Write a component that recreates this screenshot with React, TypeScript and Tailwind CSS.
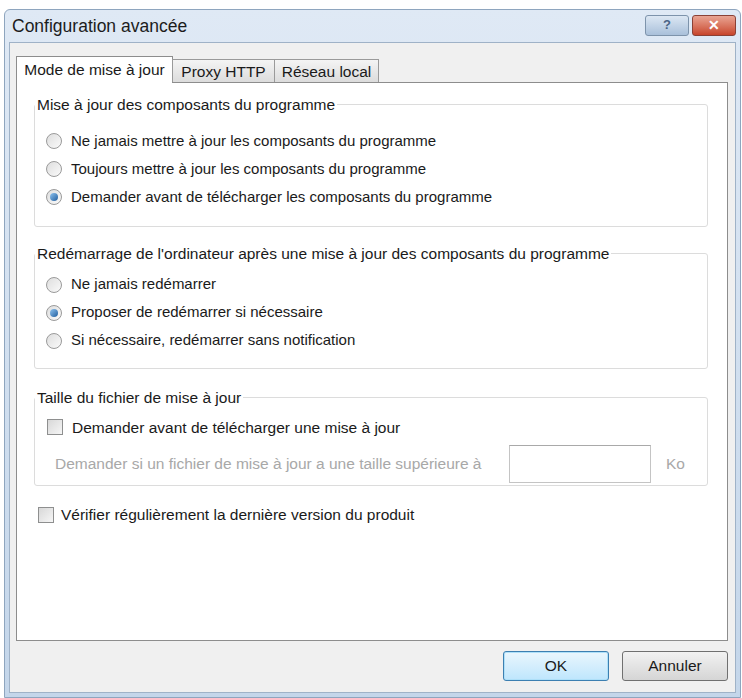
import React, { useState } from 'react';

const FONT = "font-['Liberation_Sans',Arial,sans-serif]";

function Radio({ checked, label, onSelect }: { checked: boolean; label: string; onSelect: () => void }) {
  return (
    <label onClick={onSelect} className="flex items-center h-[28px] cursor-pointer">
      <span className="w-[16px] h-[16px] rounded-full border border-[#9a9a9a] bg-gradient-to-br from-[#dedede] to-[#fafafa] flex items-center justify-center mr-[9px]">
        {checked && <span className="w-[8px] h-[8px] rounded-full bg-gradient-to-br from-[#8fc4f0] to-[#1f5e9e]" />}
      </span>
      <span className="text-[15px] text-[#1a1a1a]">{label}</span>
    </label>
  );
}

function Check({ checked, label, onToggle, gap = 'mr-[9px]' }: { checked: boolean; label: string; onToggle: () => void; gap?: string }) {
  return (
    <label onClick={onToggle} className="flex items-center cursor-pointer">
      <span className={`w-[16px] h-[16px] border border-[#8e8f8f] bg-gradient-to-br from-[#d8d8d8] to-[#f6f6f6] ${gap} flex items-center justify-center text-[12px] leading-none text-[#2a5a8a]`}>
        {checked ? '✓' : ''}
      </span>
      <span className="text-[15.5px] text-[#1a1a1a]">{label}</span>
    </label>
  );
}

function Group({ title, className, children }: { title: string; className?: string; children: React.ReactNode }) {
  return (
    <fieldset className={`border border-[#dcdcdc] rounded-[3px] px-[11px] ${className ?? ''}`}>
      <legend className="px-[2px] -ml-[11px] text-[15.5px] text-[#1a1a1a]">{title}</legend>
      {children}
    </fieldset>
  );
}

export default function App() {
  const [tab, setTab] = useState(0);
  const [update, setUpdate] = useState(2);
  const [reboot, setReboot] = useState(1);
  const [askSize, setAskSize] = useState(false);
  const [checkVersion, setCheckVersion] = useState(false);

  const tabs = [
    { label: 'Mode de mise à jour', w: 'w-[157px]' },
    { label: 'Proxy HTTP', w: 'w-[103px]' },
    { label: 'Réseau local', w: 'w-[105px]' },
  ];

  return (
    <div className={`w-[742px] h-[698px] bg-white pt-[9px] pl-[4px] ${FONT}`}>
      <div className="w-[737px] h-[689px] rounded-t-[6px] border border-[#8ea5be] bg-gradient-to-b from-[#dfe9f5] to-[#c4d6ea] flex flex-col">
        {/* Title bar */}
        <div className="h-[32px] flex items-center pl-[7px] pr-[4px]">
          <span className="text-[17.5px] text-[#1c1c1c] flex-1">Configuration avancée</span>
          <div className="flex items-center gap-[3px] -mt-[2px]">
            <button className="w-[44px] h-[21px] rounded-[3px] border border-[#7d93ab] bg-gradient-to-b from-[#dce7f3] to-[#a9c0da] text-[13px] font-bold text-[#4a6485] flex items-center justify-center">
              ?
            </button>
            <button className="w-[44px] h-[21px] rounded-[3px] border border-[#8a4136] bg-gradient-to-b from-[#e8a493] to-[#c7442b] text-white text-[14px] font-bold flex items-center justify-center">
              ✕
            </button>
          </div>
        </div>

        {/* Client area */}
        <div className="flex-1 mx-[4px] mb-[4px] border border-[#9fb2c7] bg-[#f0f0f0] flex flex-col px-[6px] pt-[12px]">
          {/* Tabs */}
          <div className="flex items-end h-[27px] relative z-10">
            {tabs.map((t, i) => (
              <button
                key={t.label}
                onClick={() => setTab(i)}
                className={
                  i === tab
                    ? `${t.w} h-[27px] border border-b-0 border-[#8d8d8d] bg-white text-[15.5px] text-[#1a1a1a] -mb-px`
                    : `${t.w} h-[23px] border border-b-0 border-[#9a9a9a] bg-gradient-to-b from-[#f4f4f4] to-[#dcdcdc] text-[15.5px] text-[#1a1a1a] -ml-px`
                }
              >
                {t.label}
              </button>
            ))}
          </div>

          {/* Tab panel */}
          <div className="h-[559px] w-[712px] border border-[#8d8d8d] bg-white pt-[10px] pl-[17px] pr-[19px]">
            <Group title="Mise à jour des composants du programme" className="pb-[15px] pt-[11px]">
              <Radio checked={update === 0} label="Ne jamais mettre à jour les composants du programme" onSelect={() => setUpdate(0)} />
              <Radio checked={update === 1} label="Toujours mettre à jour les composants du programme" onSelect={() => setUpdate(1)} />
              <Radio checked={update === 2} label="Demander avant de télécharger les composants du programme" onSelect={() => setUpdate(2)} />
            </Group>

            <Group title="Redémarrage de l'ordinateur après une mise à jour des composants du programme" className="mt-[15px] pb-[13px] pt-[5px]">
              <Radio checked={reboot === 0} label="Ne jamais redémarrer" onSelect={() => setReboot(0)} />
              <Radio checked={reboot === 1} label="Proposer de redémarrer si nécessaire" onSelect={() => setReboot(1)} />
              <Radio checked={reboot === 2} label="Si nécessaire, redémarrer sans notification" onSelect={() => setReboot(2)} />
            </Group>

            <Group title="Taille du fichier de mise à jour" className="mt-[17px] pb-[2px] pt-[7px]">
              <div className="pl-[1px]">
                <Check checked={askSize} label="Demander avant de télécharger une mise à jour" onToggle={() => setAskSize(!askSize)} />
              </div>
              <div className="flex items-center mt-[6px] pl-[9px]">
                <span className="text-[15.5px] text-[#a8a8a8] w-[454px]">
                  Demander si un fichier de mise à jour a une taille supérieure à
                </span>
                <input
                  disabled={!askSize}
                  className="w-[142px] h-[38px] border border-[#c4c4c4] border-t-[#a9a9a9] bg-white outline-none"
                />
                <span className="ml-[15px] text-[15.5px] text-[#a8a8a8]">Ko</span>
              </div>
            </Group>

            <div className="mt-[17px] ml-[4px]">
              <Check checked={checkVersion} gap="mr-[7px]" label="Vérifier régulièrement la dernière version du produit" onToggle={() => setCheckVersion(!checkVersion)} />
            </div>
          </div>

          {/* Buttons */}
          <div className="flex justify-end gap-[13px] mt-[10px] pr-[1px]">
            <button className="w-[106px] h-[30px] rounded-[3px] border border-[#3c7fb1] bg-gradient-to-b from-[#eaf6fd] to-[#bee6fd] shadow-[inset_0_0_0_1px_#aee0f9] text-[15.5px] text-[#1a1a1a]">
              OK
            </button>
            <button className="w-[106px] h-[30px] rounded-[3px] border border-[#707070] bg-gradient-to-b from-[#f2f2f2] to-[#d5d5d5] text-[15.5px] text-[#1a1a1a]">
              Annuler
            </button>
          </div>
        </div>
      </div>
    </div>
  );
}
